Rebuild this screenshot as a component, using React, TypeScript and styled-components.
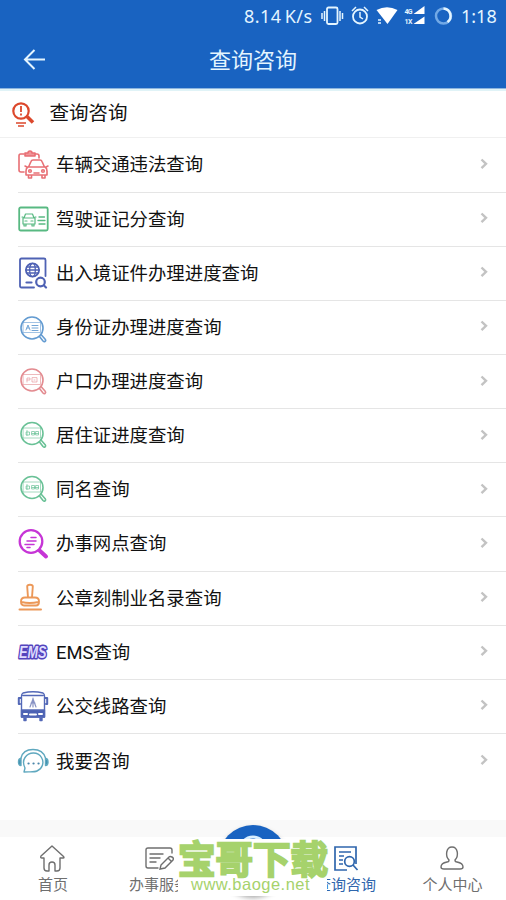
import React from 'react';
import styled, { createGlobalStyle } from 'styled-components';

const GlobalStyle = createGlobalStyle`
  * { box-sizing: border-box; }
  body { margin: 0; background: #fff; overflow: hidden; }
`;

const Screen = styled.div`
  width: 506px;
  height: 900px;
  display: flex;
  flex-direction: column;
  overflow: hidden;
  background: #fff;
  color: #111;
  font-family: Roboto, "Noto Sans CJK SC", sans-serif;
`;

const Header = styled.header`
  height: 89px;
  flex: none;
  background: #1963c1;
  border-bottom: 1px solid #8db5df;
  color: #e4f5ff;
`;

const StatusBar = styled.div`
  height: 31px;
  padding-right: 9px;
  display: flex;
  justify-content: flex-end;
  align-items: center;
  font: 18px/30px "Noto Sans", sans-serif;
  svg { display: block; }
`;

const Speed = styled.span`
  width: 68px;
  margin-right: 8px;
  white-space: nowrap;
  word-spacing: -2px;
  letter-spacing: 0.45px;
`;

const Clock = styled.span`
  width: 36px;
  font-size: 18px;
  white-space: nowrap;
`;

const TitleBar = styled.div`
  height: 57px;
  display: grid;
  grid-template-columns: 68px 1fr 68px;
  align-items: center;
`;

const BackButton = styled.button`
  border: 0;
  padding: 0 0 0 22px;
  background: none;
  color: inherit;
  svg { display: block; }
`;

const Title = styled.h1`
  margin: 0;
  padding-top: 2px;
  text-align: center;
  font-size: 22px;
  font-weight: 400;
  line-height: 56px;
`;

const Section = styled.div`
  height: 49.4px;
  flex: none;
  display: flex;
  align-items: center;
  gap: 11.5px;
  padding: 0 0 5px 10px;
  border-top: 2px solid #e0f3f7;
  border-bottom: 1px solid #f0f0f0;
  font-size: 19.5px;
  svg { display: block; margin-top: 7px; }
`;

const List = styled.main`
  flex: 1;
`;

const Row = styled.div`
  height: 54.15px;
  margin-left: 18px;
  padding-right: 16px;
  display: flex;
  align-items: center;
  border-bottom: 1px solid #e5e5e5;
  font-size: 18.4px;
  &:last-child { border-bottom: 0; }
`;

const RowIcon = styled.svg`
  width: 32px;
  height: 32px;
  margin: 0 7px 0 -1px;
  flex: none;
  fill: none;
  stroke-linecap: round;
  stroke-linejoin: round;
`;

const Label = styled.span`
  flex: 1;
  line-height: 28px;
  padding-top: 1px;
  white-space: nowrap;
`;

const Footer = styled.footer`
  position: relative;
  height: 80px;
  flex: none;
  border-top: 17px solid #f9f9f9;
  background: #fff;
`;

const Tabs = styled.nav`
  height: 63px;
  display: grid;
  grid-template-columns: 106px 106px 81px 106px 107px;
`;

const Tab = styled.div<{ $active?: boolean }>`
  display: flex;
  flex-direction: column;
  align-items: center;
  padding-top: 7px;
  color: ${p => (p.$active ? '#2f66ad' : '#6f6f6f')};
  font-size: 15px;
  line-height: 20px;
  white-space: nowrap;
  svg { display: block; margin-bottom: 3px; }
`;

const RoundButton = styled.div`
  position: absolute;
  left: 218px;
  top: -12px;
  width: 70px;
  height: 70px;
  border-radius: 50%;
  background: #1963c1;
  box-shadow: 0 3px 5px #aaa;
  svg { display: block; }
`;

const Watermark = styled.div`
  position: absolute;
  left: 178px;
  top: 2px;
  width: 149px;
  height: 57px;
  background: #fff;
  color: #a6d26c;
  white-space: nowrap;
`;

const MarkName = styled.div`
  height: 36px;
  font: 500 37.5px/36px "Noto Sans CJK SC", sans-serif;
  -webkit-text-stroke: 2.6px #a6d26c;
  stroke-linejoin: round;
`;

const MarkUrl = styled.div`
  padding-left: 13px;
  font: 16.5px/19px "Liberation Sans", sans-serif;
  letter-spacing: 0.48px;
`;

function Lens({ color, y = 14, children }: { color: string; y?: number; children: React.ReactNode }) {
  return (
    <g transform={`translate(0 ${y - 14})`} stroke={color}>
      <circle cx="15" cy="14" r="11" strokeWidth="1.6" />
      <path d="M22.500 22.500l3.500 4.500c1.500 1.500 3.500 0 2.200-1.800l-4.200-4.700" strokeWidth="1.600" />
      <path d="M6.500 8.500h17v10h-17z" strokeWidth=".6" />
      {children}
    </g>
  );
}

const permit = <path d="M9.500 12.500h3v3h-3zM10 11v5M15 12h2.500v3.500H15zM19 12h2.500v3.500H19zM15 14h6.500" strokeWidth=".7" />;

const items: { label: string; icon: React.ReactNode }[] = [
  {
    label: '车辆交通违法查询',
    icon: (
      <g stroke="#e86f74" strokeWidth="1.600">
        <path d="M7 5H3.500Q2 5 2 7v14q0 2 2 2h3M17 5h3q2 0 2 2v2" />
        <path d="M8 7V4h3a2 2 0 014 0h3v3z" fill="#ef9599" />
        <path d="M11.500 18l2.500-5.500q.5-1.500 2-1.500h7q1.500 0 2 1.500l2.500 5.500M11 18h17q2 1 2 4v4H9v-4q0-3 2-4zM11.500 27v2h3v-2M25 27v2h3v-2M8 17l2 1M31 17l-2 1M17 24h5" />
        <circle cx="13" cy="22" r="1.300" /><circle cx="26" cy="22" r="1.300" />
      </g>
    ),
  },
  {
    label: '驾驶证记分查询',
    icon: (
      <g stroke="#58b982">
        <rect x="2.200" y="4.500" width="28.500" height="23" rx="1.500" strokeWidth="1.800" />
        <path d="M7 15l1.500-4h7l1.500 4M6 15h12v6H6zM7 21v2h2v-2M15 21v2h2v-2M8 18h2M14 18h2M5 14h1M18 14h1" strokeWidth="1.200" />
        <path d="M22 14h5.500M21 17.500h7M22 21h6" strokeWidth="1.300" />
      </g>
    ),
  },
  {
    label: '出入境证件办理进度查询',
    icon: (
      <g stroke="#4f62b4" strokeWidth="1.800">
        <path d="M17 30.500H4.500Q3 30.500 3 29V3Q3 1.500 4.500 1.500H27q1.500 0 1.500 1.500V19" />
        <path d="M9.500 25.500h5" strokeWidth="2.200" />
        <circle cx="15.500" cy="13" r="6.600" />
        <ellipse cx="15.500" cy="13" rx="2.800" ry="6.600" strokeWidth="1.300" />
        <path d="M9 13h13M10 10h11M10 16h11" strokeWidth="1.300" />
        <circle cx="23.500" cy="25" r="4.300" strokeWidth="2.200" /><path d="M27 28.500l2 2" strokeWidth="2.200" />
      </g>
    ),
  },
  {
    label: '身份证办理进度查询',
    icon: <Lens color="#639bd1" y={17}><path d="M9 16l2-5 2 5M10 14h2M15 11.500h6M15 14h6M15 16.500h6" strokeWidth=".9" /></Lens>,
  },
  {
    label: '户口办理进度查询',
    icon: <Lens color="#e38b90"><path d="M10 16v-4h3v2h-3M15 12v4h5v-4zM17 14h1" strokeWidth=".6" /></Lens>,
  },
  { label: '居住证进度查询', icon: <Lens color="#69c196" y={13.5}>{permit}</Lens> },
  { label: '同名查询', icon: <Lens color="#69c196" y={13.5}>{permit}</Lens> },
  {
    label: '办事网点查询',
    icon: (
      <g stroke="#c635d6">
        <circle cx="14" cy="13.500" r="11.300" strokeWidth="2.300" />
        <path d="M14 9.500h5M10 13h9M8 16.500h9M10 19.500h3" strokeWidth="1.500" />
        <path d="M22.500 22.500l6.500 6" strokeWidth="4" />
      </g>
    ),
  },
  {
    label: '公章刻制业名录查询',
    icon: (
      <g stroke="#ec9858" strokeWidth="1.900">
        <path d="M11 15.500l-.8-11q0-1.800 2.800-1.800t2.800 1.800l-.8 11M8 15.500h10q4 0 4 4t-3 4H7q-3 0-3-4t4-4zM4.500 20q8 2 17 0" />
        <path d="M2.500 27.500H24" strokeWidth="2" />
      </g>
    ),
  },
  {
    label: 'EMS查询',
    icon: (
      <text x="2" y="22" fontFamily="Liberation Sans, sans-serif" fontSize="16.500" fontWeight="700" fontStyle="italic" textLength="27.500" lengthAdjust="spacingAndGlyphs" fill="#dedcff" stroke="#5444bd" strokeWidth="3.200" paintOrder="stroke">EMS</text>
    ),
  },
  {
    label: '公交线路查询',
    icon: (
      <g stroke="#5368b7" strokeWidth="1.400">
        <path d="M6 3Q16 .5 26 3q1.500 1 1.500 3v21h-23V6q0-2 1.500-3zM6 5.500h20" />
        <path d="M4.500 20h23v7h-23z" fill="#4c62b3" />
        <path d="M4 8H1.800v6H3M28 8h2.200v6H29" strokeWidth="2" />
        <path d="M7 28v2.500h2V28M23 28v2.500h2V28" fill="#4c62b3" />
        <path d="M13 17l3-8 3 8M16 8v9M14 13h4" stroke="#8792c4" strokeWidth="1.200" />
        <path d="M7 24h3M13 24.500h6M22 24h3" stroke="#fff" strokeWidth="2" />
      </g>
    ),
  },
  {
    label: '我要咨询',
    icon: (
      <g stroke="#5fa8bf" strokeWidth="1.400">
        <path d="M4 13Q6 4.500 16 4.500T28.500 13" />
        <path d="M7 27l1-4Q5 17 8 12.500c4-6 13-6 16.500 0 3 5 1 11-4.500 13.500-3 1.400-8 .5-13 1z" />
        <path d="M4 13.500v7q-2.500 0-2.500-3.500T4 13.500zM28.500 13.500v7q2.500 0 2.500-3.500t-2.500-3.500z" fill="#3f8cad" />
        <path d="M11.500 18.500h.1M16.500 18.500h.1M21.500 18.500h.1" stroke="#4a86aa" strokeWidth="2.200" />
      </g>
    ),
  },
];

const Chevron = () => (
  <svg width="12" height="14" viewBox="0 0 12 14" fill="none" stroke="#c3c3c3" strokeWidth="2.400">
    <path d="M3.500 1.500L8 5.800l-4.500 4.300" />
  </svg>
);

const StatusIcons = () => (
  <svg width="141" height="30" viewBox="320 0 141 30" fill="none" stroke="#e4f5ff" strokeWidth="1.500">
    <rect x="327" y="6.500" width="10.500" height="16.500" rx="1.500" strokeWidth="1.800" />
    <path d="M324.500 10v10M322 12v6M340 10v10M342.500 12v6" />
    <circle cx="360" cy="15.500" r="7" strokeWidth="1.800" />
    <path d="M360 11v5l3 2M352 10l4-4M368 10l-4-4" />
    <path d="M376.500 9q10.500-5.500 21 0L387.500 23z" fill="#fff" stroke="none" />
    <path d="M378 19h3M378 22h3" />
    <path d="M413.500 13h11V5zM413.500 23h11v-7.500z" fill="#fff" stroke="none" />
    <text x="404.500" y="12.500" fill="#e4f5ff" stroke="none" fontFamily="Roboto" fontWeight="700" fontSize="7" textLength="8">4G</text>
    <text x="404.500" y="23" fill="#e4f5ff" stroke="none" fontFamily="Roboto" fontWeight="700" fontSize="7" textLength="8">1X</text>
    <circle cx="443.500" cy="15" r="7.500" stroke="#72a9e6" strokeWidth="2.500" />
    <path d="M443.500 7.500a7.500 7.500 0 014 13.500" strokeWidth="2.500" />
  </svg>
);

export default function App() {
  return (
    <>
      <GlobalStyle />
      <Screen>
        <Header>
          <StatusBar>
            <Speed>8.14 K/s</Speed>
            <StatusIcons />
            <Clock>1:18</Clock>
          </StatusBar>
          <TitleBar>
            <BackButton aria-label="返回">
              <svg width="26" height="24" viewBox="0 0 26 24" fill="none" stroke="currentColor" strokeWidth="2">
                <path d="M23 11.500H3M12.500 2L3 11.500l9.500 9.500" />
              </svg>
            </BackButton>
            <Title>查询咨询</Title>
          </TitleBar>
        </Header>
        <Section>
          <svg width="28" height="28" viewBox="0 0 28 28" fill="none" stroke="#dc482c">
            <circle cx="11" cy="10" r="7.700" strokeWidth="2.200" />
            <path d="M17 15.500l6 6" strokeWidth="3.500" />
            <path d="M11 5v6M11 12.500v2" strokeWidth="1.800" />
            <path d="M6 22h10M8 25h6" strokeWidth="1.500" />
          </svg>
          查询咨询
        </Section>
        <List>
          {items.map(item => (
            <Row key={item.label}>
              <RowIcon viewBox="0 0 32 32">{item.icon}</RowIcon>
              <Label>{item.label}</Label>
              <Chevron />
            </Row>
          ))}
        </List>
        <Footer>
          <Tabs>
            <Tab>
              <svg width="28" height="28" viewBox="0 0 28 28" fill="none" stroke="currentColor" strokeWidth="1.400" strokeLinejoin="round">
                <path d="M13 2L2 12q-1 2 1 2h2v10q0 3 3 3h2v-6q0-3 3-3t3 3v6h2q3 0 3-3V14h3q2 0 0-2z" />
              </svg>
              首页
            </Tab>
            <Tab>
              <svg width="30" height="28" viewBox="0 0 30 28" fill="none" stroke="currentColor" strokeWidth="1.400" strokeLinecap="round">
                <path d="M28 9V6q0-2-2-2H4Q2 4 2 6v16q0 2 2 2h10M6 10h13M6 14h10M6 18h6" />
                <path d="M17 21l8-8q1-1 3 0t1 3l-8 8-5 1zM24 14l3 3" />
              </svg>
              办事服务
            </Tab>
            <span />
            <Tab $active>
              <svg width="28" height="28" viewBox="0 0 28 28" fill="none" stroke="currentColor" strokeWidth="1.700">
                <path d="M15 26H3V3h21v17M7 8h12M7 12h5M7 16h4M7 20h4" />
                <circle cx="17.500" cy="17.500" r="4.800" /><path d="M21 21l4.500 5" />
              </svg>
              查询咨询
            </Tab>
            <Tab>
              <svg width="28" height="28" viewBox="0 0 28 28" fill="none" stroke="currentColor" strokeWidth="1.400">
                <path d="M10 16C6 12 7 3 13 3s7 9 3 13q0 2 2 2c5 1 6 3 6 5q0 2-3 2H5q-3 0-3-2c0-2 1-4 6-5q2 0 2-2z" />
              </svg>
              个人中心
            </Tab>
          </Tabs>
          <RoundButton>
            <svg width="70" height="70" viewBox="0 0 70 70" fill="none" stroke="#d9efff" strokeWidth="3">
              <circle cx="35" cy="25" r="13" />
            </svg>
          </RoundButton>
          <Watermark>
            <MarkName>宝哥下载</MarkName>
            <MarkUrl>www.baoge.net</MarkUrl>
          </Watermark>
        </Footer>
      </Screen>
    </>
  );
}
